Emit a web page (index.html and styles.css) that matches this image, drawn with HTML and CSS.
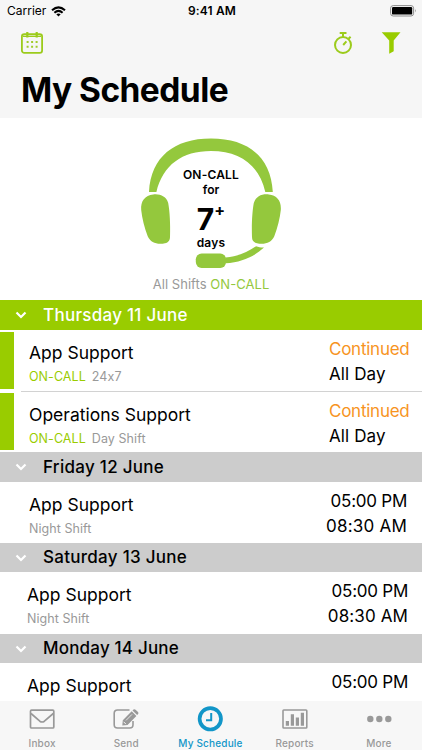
FILE: index.html
```html
<!DOCTYPE html>
<html lang="en">
<head>
<meta charset="utf-8">
<title>My Schedule</title>
<link rel="stylesheet" href="styles.css">
</head>
<body>
<div class="app">
  <header class="top">
    <div class="status">
      <div class="status-left"><span class="carrier">Carrier</span>
        <svg class="wifi" width="15" height="11" viewBox="0 0 15 11"><path d="M1 4.3Q7.5-1.6 14 4.3M3.4 6.7Q7.5 3 11.6 6.7" fill="none" stroke="#000" stroke-width="2"/><path d="M5.3 8.3Q7.5 6.5 9.7 8.3L7.5 10.6z"/></svg>
      </div>
      <span class="clock">9:41 AM</span>
      <svg class="battery" width="27" height="12" viewBox="0 0 27 12"><rect x=".6" y=".6" width="23" height="10.4" rx="2.6" fill="none" stroke="#8c8c8c" stroke-width="1"/><rect x="2" y="2" width="20.2" height="7.6" rx="1.2"/><path d="M25 4q1.6 1.8 0 3.6z" fill="#8c8c8c"/></svg>
    </div>
    <nav class="tools">
      <svg class="cal" width="24" height="24" viewBox="0 0 24 24"><rect x="1.9" y="3.1" width="20.2" height="18.7" rx="2.4" fill="none" stroke="#9ccb1c" stroke-width="1.8"/><path d="M3 5.3h18" stroke="#9ccb1c" stroke-width="1.4"/><path d="M7.3 1v5.5M16.7 1v5.5" stroke="#9ccb1c" stroke-width="2.2" fill="none"/><path d="M6.6 10h2v2h-2zM11.1 10h2v2h-2zM15.6 10h2v2h-2zM6.6 14.7h2v2h-2zM11.1 14.7h2v2h-2zM15.6 14.7h2v2h-2z" fill="#a0cc2c"/></svg>
      <svg class="timer" width="22" height="24" viewBox="0 0 22 24"><circle cx="11" cy="14" r="8" fill="none" stroke="#9ccb1c" stroke-width="2"/><path d="M7.7 2.1h6.8M11 2v4M16.6 7.8l2-2M11.2 14l3.2-3.6" stroke="#9ccb1c" stroke-width="2" fill="none"/></svg>
      <svg class="funnel" width="20" height="24" viewBox="0 0 20 24"><path d="M.7 1.2h18.8L12.7 9.5v10.7l-4.5 2.5V9.5z" fill="#99cc00"/></svg>
    </nav>
    <h1>My Schedule</h1>
  </header>

  <section class="hero">
    <div class="headset">
      <svg width="144" height="134" viewBox="0 0 144 134" fill="#94c83d">
        <path d="M10 57C12 22 35 3.6 72 3.6S132 22 133.8 57h-7.5C120 30 101 16 72 16S24 30 17.4 57z"/>
        <path d="M14.2 59.5c7-.8 13 2 15 8.5 1.5 8 2.3 21 1.8 34-.1 3.5-1.4 5.400-5 6.300-7.500 1.600-14.500-.5-17.300-7C5.500 93 3 83 2.200 75 1.500 66 6 60.300 14.200 59.500z"/>
        <path d="M129.800 59.500c-7-.8-13 2-15 8.500-1.500 8-2.300 21-1.800 34 .1 3.500 1.400 5.400 5 6.300 7.500 1.600 14.500-.5 17.300-7 3.200-8.300 5.700-18.300 6.500-26.300.7-9-3.800-14.700-12-15.500z"/>
        <rect x="56.800" y="118.500" width="30.300" height="14.400" rx="5.800"/>
        <path d="M86.500 122.600c13-1.500 22-5.500 30.500-11.400 2.600 1 5 1.500 8 1.400-10.500 9.300-22 14.600-38.500 15.700z"/>
      </svg>
      <div class="count">
        <span class="c-label">ON-CALL</span>
        <span class="c-for">for</span>
        <span class="c-num">7<sup>+</sup></span>
        <span class="c-days">days</span>
      </div>
    </div>
    <p class="caption">All Shifts <b>ON-CALL</b></p>
  </section>

  <main class="list">
    <h2 class="day day-on"><svg class="chev" width="12" height="8" viewBox="0 0 12 8"><path d="M1.500 1.500L6 6l4.500-4.500"/></svg><span>Thursday 11 June</span></h2>
    <article class="shift on">
      <div class="info"><h3>App Support</h3><p><b>ON-CALL</b> 24x7</p></div>
      <div class="time"><span class="cont">Continued</span><span class="all">All Day</span></div>
    </article>
    <article class="shift on second">
      <div class="info"><h3>Operations Support</h3><p><b>ON-CALL</b> Day Shift</p></div>
      <div class="time"><span class="cont">Continued</span><span class="all">All Day</span></div>
    </article>
    <h2 class="day fri"><svg class="chev" width="12" height="8" viewBox="0 0 12 8"><path d="M1.500 1.500L6 6l4.500-4.500"/></svg><span>Friday 12 June</span></h2>
    <article class="shift off friday">
      <div class="info"><h3>App Support</h3><p>Night Shift</p></div>
      <div class="time right"><span class="start">05:00 PM</span><span class="end">08:30 AM</span></div>
    </article>
    <h2 class="day"><svg class="chev" width="12" height="8" viewBox="0 0 12 8"><path d="M1.500 1.500L6 6l4.500-4.500"/></svg><span>Saturday 13 June</span></h2>
    <article class="shift off saturday">
      <div class="info"><h3>App Support</h3><p>Night Shift</p></div>
      <div class="time right"><span class="start">05:00 PM</span><span class="end">08:30 AM</span></div>
    </article>
    <h2 class="day mon"><svg class="chev" width="12" height="8" viewBox="0 0 12 8"><path d="M1.500 1.500L6 6l4.500-4.500"/></svg><span>Monday 14 June</span></h2>
    <article class="shift off monday">
      <div class="info"><h3>App Support</h3></div>
      <div class="time right"><span class="start">05:00 PM</span></div>
    </article>
  </main>

  <nav class="tabs">
    <a class="tab"><svg width="28" height="28" viewBox="0 0 28 28" fill="none" stroke="#999" stroke-width="1.700"><rect x="2.500" y="5.200" width="23.300" height="17.800" rx="1"/><path d="M3 8.500l8.800 7.700q2.300 1.600 4.600 0L25.300 8.500"/></svg><span>Inbox</span></a>
    <a class="tab"><svg width="28" height="28" viewBox="0 0 28 28"><path d="M17.500 5H5.500Q2.200 5 2.200 8.300v11.400Q2.200 23 5.500 23h12.200q3.300 0 3.300-3.300V16" fill="none" stroke="#999" stroke-width="1.600"/><path d="M10.800 15.200l8.900-8.900 4.700 4.700-8.900 8.900-5.200.7zM20.500 5.500l1-1q1-.8 2.100.2l2.400 2.400q.9 1 .1 2l-1 1z" fill="#999"/><path d="M14 15.400l6-6" stroke="#f7f7f7" stroke-width=".8"/><path d="M11.600 16.800l2.300 2.300" stroke="#f7f7f7" stroke-width="1"/></svg><span>Send</span></a>
    <a class="tab active"><svg width="28" height="28" viewBox="0 0 28 28" fill="none" stroke="#1296c8"><circle cx="14.300" cy="13.800" r="10.700" stroke-width="3.700"/><path d="M15.200 8v7.200H10" stroke-width="2"/></svg><span>My Schedule</span></a>
    <a class="tab"><svg width="28" height="28" viewBox="0 0 28 28"><rect x="2" y="5" width="23.800" height="18" rx=".8" fill="none" stroke="#999" stroke-width="1.600"/><path d="M4.800 16h3.200v4.800H4.800zM9.800 9.300h3.200v11.500H9.800zM14.800 12.500H18v8.300h-3.200zM19.800 7.800H23v13h-3.200z" fill="#999"/></svg><span>Reports</span></a>
    <a class="tab"><svg width="28" height="28" viewBox="0 0 28 28" fill="#999"><circle cx="5.300" cy="14" r="3.200"/><circle cx="14.300" cy="14" r="3.200"/><circle cx="23.300" cy="14" r="3.200"/></svg><span>More</span></a>
  </nav>
</div>
</body>
</html>
```
FILE: styles.css
```css
* { box-sizing: border-box; margin: 0; padding: 0; }
body { width: 422px; height: 750px; overflow: hidden; background: #fff; color: #000; font-family: Inter, "Liberation Sans", sans-serif; font-feature-settings: "calt" 0; }
.app { display: flex; flex-direction: column; height: 750px; }
svg { display: block; flex: none; }
span { white-space: nowrap; }

.top { height: 118px; background: #f6f6f6; flex: none; }
.status { display: grid; grid-template-columns: 1fr auto 1fr; height: 22px; padding: 0 5px 0 7px; align-items: center; font-size: 12px; line-height: 22px; }
.status-left { display: flex; align-items: center; gap: 5px; }
.clock { font-weight: 600; letter-spacing: 0.15px; }
.battery { justify-self: end; }
.tools { display: flex; height: 42px; padding: 9px 21px 0 20px; }
.timer { margin-left: auto; }
.funnel { margin-left: 27px; }
h1 { padding-left: 21px; font-size: 33.5px; line-height: 40px; margin-top: 6px; font-weight: 700; letter-spacing: -0.55px; white-space: nowrap; }

.hero { height: 182px; flex: none; padding-top: 17px; }
.headset { display: grid; width: 144px; height: 134px; margin: 0 auto; }
.headset > * { grid-area: 1 / 1; }
.count { display: flex; flex-direction: column; align-items: center; padding-top: 32px; font-weight: 600; font-size: 12px; line-height: 15px; }
.c-label { letter-spacing: 0.2px; }
.c-num { display: flex; font-size: 30px; line-height: 32px; margin-top: 6px; font-weight: 700; }
.c-num sup { font-size: 16px; line-height: 16px; margin-top: -1px; }
.c-days { letter-spacing: 0.2px; line-height: 15px; }
.caption { text-align: center; margin-top: 6px; font-size: 13px; line-height: 18px; letter-spacing: 0.05px; color: #999; }
.caption b { color: #94c83d; font-weight: 400; }

.list { height: 401px; overflow: hidden; flex: none; background: #fff; }
.day { display: flex; align-items: center; gap: 16px; height: 29px; padding-left: 15px; background: #ccc; font-size: 17px; font-weight: 500; line-height: 29px; letter-spacing: 0.28px; }
.mon { letter-spacing: 0.2px; }
.day-on { height: 30px; background: #99cc00; color: #fff; }
.chev path { fill: none; stroke: #fff; stroke-width: 2.2; }
.shift { display: flex; justify-content: space-between; }
.on { height: 57px; margin: 2px 0 0; border-left: 14px solid #99cc00; padding: 0 0 0 15px; }
.second { margin-top: 4px; position: relative; }
.second::before { content: ""; position: absolute; left: 7px; right: 0; top: -2px; height: 1px; background: #d2d2d2; }
h3 { font-size: 17.5px; font-weight: 400; line-height: 22px; white-space: nowrap; }
.info p { font-size: 12.5px; line-height: 16px; letter-spacing: 0.06px; color: #999; margin-top: 5px; white-space: nowrap; }
.info p b { color: #99cc00; font-weight: 400; margin-right: 2.5px; }
.on .info { padding-top: 10px; }
.second .info { padding-top: 11px; }
.time { display: flex; flex-direction: column; font-size: 17px; line-height: 25px; }
.on .time { width: 93px; padding-top: 5px; }
.second .time { padding-top: 6px; }
.cont { color: #f7941e; letter-spacing: -0.25px; }
.all { letter-spacing: 0.1px; }
.fri { margin-top: 2px; height: 30px; }
.off { height: 61px; padding: 0 14px 0 27px; }
.off .info { padding-top: 11px; }
.right { align-items: flex-end; padding-top: 6px; }
.start { letter-spacing: -0.25px; }
.end { letter-spacing: 0.12px; }
.friday { padding-left: 29px; padding-right: 15px; }
.friday .info { padding-top: 12px; }
.friday .right { padding-top: 7px; }
.friday .end { letter-spacing: 0.22px; }
.saturday { height: 62px; }
.saturday .info, .monday .info { padding-top: 12px; }
.saturday .right, .monday .right { padding-top: 7px; }

.tabs { height: 49px; flex: none; display: grid; grid-template-columns: repeat(5, 84.2px); background: #f7f7f7; }
.tab { display: flex; flex-direction: column; align-items: center; padding-top: 4px; color: #999; font-size: 10px; font-weight: 500; line-height: 12px; letter-spacing: 0.17px; }
.tab span { margin-top: 4px; }
.active { color: #1296c8; }
```
